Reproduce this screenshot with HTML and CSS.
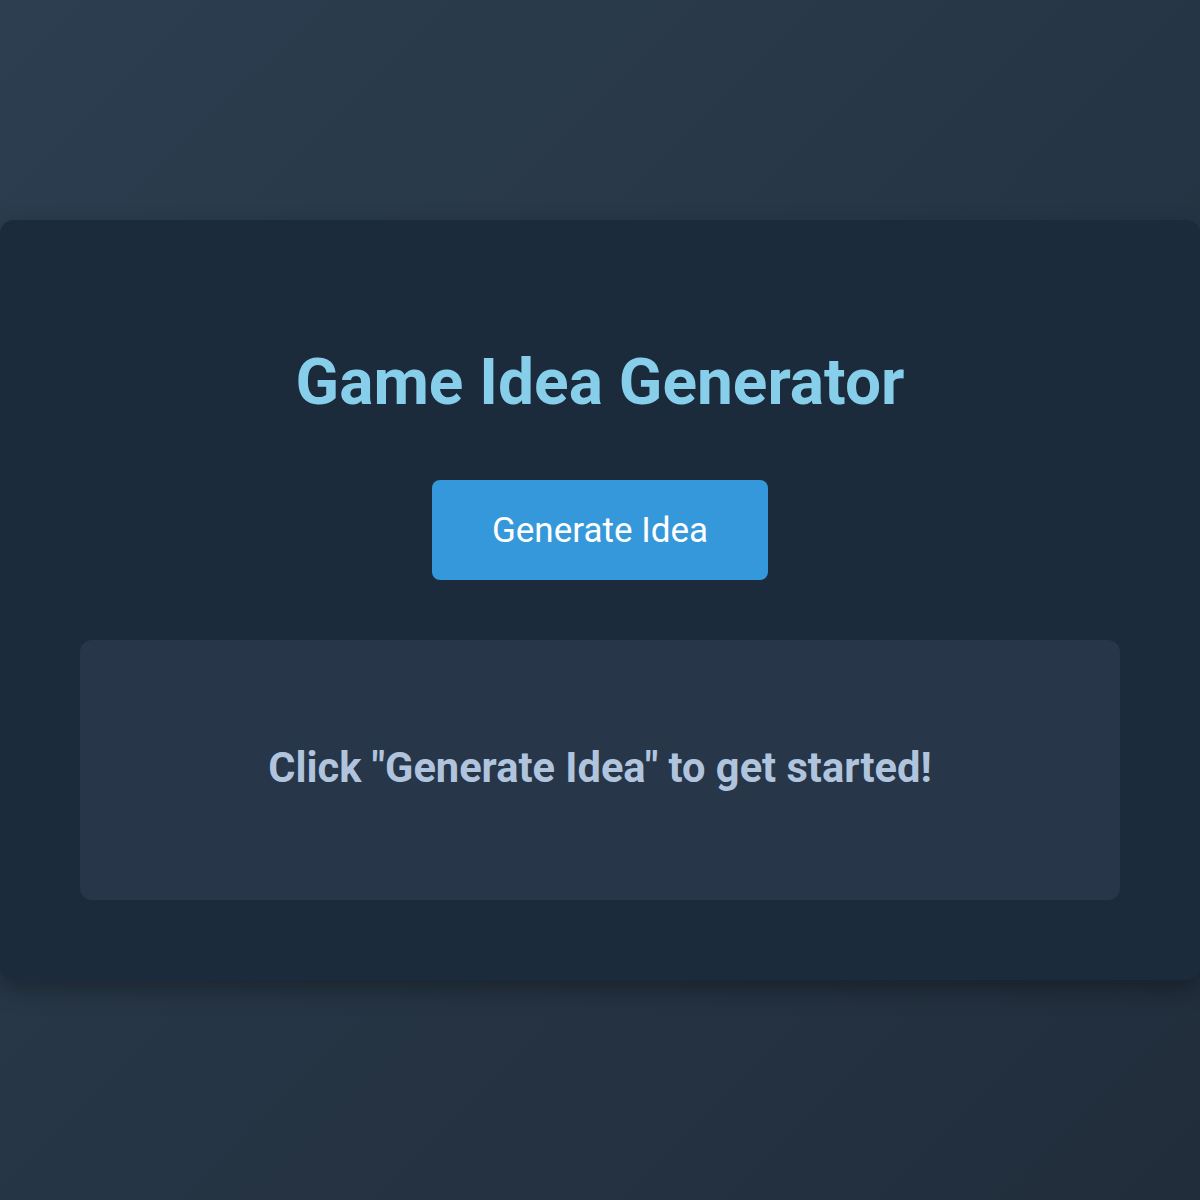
FILE: index.html
```html
<!DOCTYPE html>
<html lang="en">
<head>
  <meta charset="UTF-8" />
  <meta name="viewport" content="width=device-width, initial-scale=1.0" />
  <title>Game Idea Generator</title>
  <link rel="stylesheet" href="styles.css">
</head>
<body>
  <div class="container">
    <h1>Game Idea Generator</h1>
    <button id="generate">Generate Idea</button>
    <div class="idea" id="idea">
      <p class="placeholder">Click "Generate Idea" to get started!</p>
    </div>
  </div>
</body>
</html>
```

FILE: styles.css
```css
html, body {
  height: 100%;
}
body {
  font-family: Roboto, 'Liberation Sans', sans-serif;
  background: linear-gradient(135deg, #2c3e50 0%, #212d3b 100%);
  margin: 0;
  padding: 0;
  display: flex;
  align-items: center;
  justify-content: center;
  color: #fff;
}
.container {
  box-sizing: border-box;
  width: 100%;
  padding: 80px;
  background: #1c2b3b;
  border-radius: 14px;
  box-shadow: 0 10px 25px rgba(0, 0, 0, 0.3);
  text-align: center;
}
h1 {
  color: #87ceeb;
  font-size: 64px;
  font-weight: 700;
  line-height: 74px;
  margin: 46px 0 60px;
}
button {
  width: 336px;
  height: 100px;
  background: #3498db;
  color: #fff;
  border: none;
  border-radius: 8px;
  font-family: inherit;
  font-size: 35px;
  cursor: pointer;
}
.idea {
  height: 260px;
  margin-top: 60px;
  background: #273648;
  border-radius: 12px;
  display: flex;
  align-items: center;
  justify-content: center;
}
.placeholder {
  margin: 0 0 6px;
  color: #b0c4de;
  font-size: 41.6px;
  font-weight: 700;
}
```
